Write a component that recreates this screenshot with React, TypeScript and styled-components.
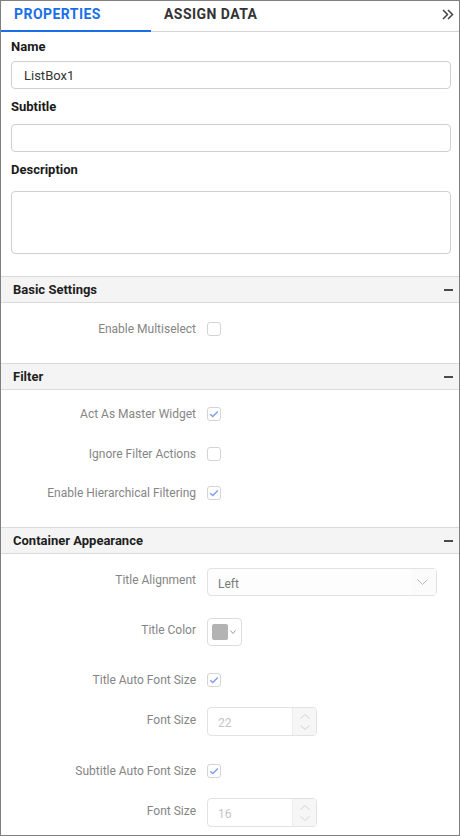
import styled, { createGlobalStyle } from "styled-components";

const GlobalStyle = createGlobalStyle`
  html, body {
    margin: 0;
    padding: 0;
    background: #fff;
  }
  body {
    font-family: Roboto, "Liberation Sans", sans-serif;
  }
  * {
    box-sizing: border-box;
  }
`;

const Check = () => (
  <svg width="12" height="12" viewBox="0 0 12 12">
    <path d="M2.2 6.2 L4.8 8.6 L9.8 3.4" fill="none" stroke="#7f9cf3" strokeWidth="1.4" />
  </svg>
);

const Chevron = ({ w, h, color }: { w: number; h: number; color: string }) => (
  <svg width={w} height={h} viewBox={`0 0 ${w} ${h}`}>
    <path d={`M0.5 0.5 L${w / 2} ${h - 0.5} L${w - 0.5} 0.5`} fill="none" stroke={color} strokeWidth="1" />
  </svg>
);

const CheckBox = ({ checked }: { checked?: boolean }) => (
  <Box>{checked && <Check />}</Box>
);

const SpinBox = ({ value }: { value: string }) => (
  <Numeric>
    <NumericValue>{value}</NumericValue>
    <Spinner>
      <svg width="10" height="5" viewBox="0 0 10 5">
        <path d="M0.5 4.5 L5 0.5 L9.5 4.5" fill="none" stroke="#d2d2d2" strokeWidth="1" />
      </svg>
      <Chevron w={10} h={5} color="#d2d2d2" />
    </Spinner>
  </Numeric>
);

const Section = ({ title }: { title: string }) => (
  <SectionHeader>
    {title}
    <Minus />
  </SectionHeader>
);

const App = () => {
  return (
    <>
      <GlobalStyle />
      <Panel>
        <TabBar>
          <Tab $active>PROPERTIES</Tab>
          <Tab>ASSIGN DATA</Tab>
          <Collapse>
            <svg width="12" height="11" viewBox="0 0 12 11">
              <path d="M1 1 L5.5 5.5 L1 10 M6 1 L10.5 5.5 L6 10" fill="none" stroke="#444" strokeWidth="1.5" />
            </svg>
          </Collapse>
        </TabBar>

        <Form>
          <Field>
            <FieldLabel $gap={6}>Name</FieldLabel>
            <TextInput defaultValue="ListBox1" />
          </Field>
          <Field>
            <FieldLabel $gap={9}>Subtitle</FieldLabel>
            <TextInput />
          </Field>
          <Field>
            <FieldLabel $gap={13}>Description</FieldLabel>
            <TextArea />
          </Field>
        </Form>

        <Section title="Basic Settings" />
        <SectionBody $top={19}>
          <Row>
            <RowLabel>Enable Multiselect</RowLabel>
            <CheckBox />
          </Row>
        </SectionBody>

        <Section title="Filter" />
        <SectionBody $top={17}>
          <Row>
            <RowLabel>Act As Master Widget</RowLabel>
            <CheckBox checked />
          </Row>
          <Row $top={26}>
            <RowLabel>Ignore Filter Actions</RowLabel>
            <CheckBox />
          </Row>
          <Row $top={25}>
            <RowLabel>Enable Hierarchical Filtering</RowLabel>
            <CheckBox checked />
          </Row>
        </SectionBody>

        <Section title="Container Appearance" />
        <SectionBody $top={14}>
          <Row>
            <RowLabel $lift>Title Alignment</RowLabel>
            <Dropdown>
              <span>Left</span>
              <DropIcon>
                <Chevron w={11} h={6} color="#b4b8c8" />
              </DropIcon>
            </Dropdown>
          </Row>
          <Row $top={22}>
            <RowLabel $lift>Title Color</RowLabel>
            <ColorPicker>
              <Swatch $color="#b3b3b3" />
              <Chevron w={6} h={4} color="#9aa0b4" />
            </ColorPicker>
          </Row>
          <Row $top={27}>
            <RowLabel>Title Auto Font Size</RowLabel>
            <CheckBox checked />
          </Row>
          <Row $top={20}>
            <RowLabel $lift>Font Size</RowLabel>
            <SpinBox value="22" />
          </Row>
          <Row $top={28}>
            <RowLabel>Subtitle Auto Font Size</RowLabel>
            <CheckBox checked />
          </Row>
          <Row $top={20}>
            <RowLabel $lift>Font Size</RowLabel>
            <SpinBox value="16" />
          </Row>
        </SectionBody>
      </Panel>
    </>
  );
};

const Panel = styled.div`
  width: 460px;
  height: 836px;
  border: 1px solid #7f7f7f;
  background: #fff;
  overflow: hidden;
  display: flex;
  flex-direction: column;
`;

// 상단 탭
const TabBar = styled.div`
  display: flex;
  align-items: flex-start;
  height: 31px;
  flex-shrink: 0;
  box-shadow: inset 0 -1px 0 #d4d4d4;
`;

const Tab = styled.div<{ $active?: boolean }>`
  width: 150px;
  height: 31px;
  display: flex;
  align-items: center;
  padding: 0 0 6px 13px;
  font-size: 14px;
  font-weight: 700;
  letter-spacing: 0.45px;
  color: ${(p) => (p.$active ? "#1a6fe8" : "#333")};
  box-shadow: ${(p) => (p.$active ? "inset 0 -2px 0 #1a6fe8" : "none")};
`;

const Collapse = styled.div`
  margin-left: auto;
  padding: 8px 5px 0 0;
  display: flex;
`;

const Form = styled.div`
  display: flex;
  flex-direction: column;
  gap: 10px;
  padding: 7px 8px 22px 10px;
`;

const Field = styled.div`
  display: flex;
  flex-direction: column;
`;

const FieldLabel = styled.label<{ $gap: number }>`
  font-size: 13px;
  line-height: 16px;
  font-weight: 700;
  color: #1a1a1a;
  margin-bottom: ${(p) => p.$gap}px;
`;

const TextInput = styled.input`
  height: 28px;
  width: 100%;
  border: 1px solid #cfcfcf;
  border-radius: 4px;
  padding: 0 12px;
  font-family: Roboto, "Liberation Sans", sans-serif;
  font-size: 13px;
  color: #333;
  outline: none;
`;

const TextArea = styled.textarea`
  height: 63px;
  width: 100%;
  border: 1px solid #cfcfcf;
  border-radius: 4px;
  resize: none;
  outline: none;
`;

// 섹션 헤더
const SectionHeader = styled.div`
  flex-shrink: 0;
  height: 27px;
  display: flex;
  align-items: center;
  justify-content: space-between;
  padding: 0 6px 0 12px;
  background: #f4f4f4;
  border-top: 1px solid #dadada;
  border-bottom: 1px solid #dadada;
  font-size: 13px;
  font-weight: 700;
  color: #1e1e1e;
`;

const Minus = styled.span`
  width: 9px;
  height: 2px;
  background: #4a4a4a;
`;

const SectionBody = styled.div<{ $top: number }>`
  flex-shrink: 0;
  display: flex;
  flex-direction: column;
  padding: ${(p) => p.$top}px 0 27px;
`;

const Row = styled.div<{ $top?: number }>`
  display: flex;
  align-items: center;
  gap: 11px;
  margin-top: ${(p) => p.$top || 0}px;
`;

const RowLabel = styled.span<{ $lift?: boolean }>`
  width: 195px;
  text-align: right;
  font-size: 12px;
  line-height: 14px;
  color: #858585;
  margin-bottom: ${(p) => (p.$lift ? 4 : 0)}px;
`;

const Box = styled.span`
  width: 14px;
  height: 14px;
  border: 1px solid #d4d4d4;
  border-radius: 3px;
  background: #fff;
  display: flex;
  align-items: center;
  justify-content: center;
`;

const Dropdown = styled.div`
  width: 230px;
  height: 28px;
  border: 1px solid #e2e2e2;
  border-radius: 4px;
  background: #fdfdfd;
  display: flex;
  align-items: center;
  justify-content: space-between;
  padding-left: 10px;
  font-size: 12px;
  color: #7a7a7a;

  span {
    padding-top: 3px;
  }
`;

const DropIcon = styled.div`
  width: 24px;
  height: 100%;
  display: flex;
  align-items: center;
  justify-content: center;
  background: #fbfbfb;
  padding-right: 4px;
`;

const ColorPicker = styled.div`
  width: 35px;
  height: 28px;
  border: 1px solid #dcdcdc;
  border-radius: 4px;
  display: flex;
  align-items: center;
  gap: 2px;
  padding-left: 4px;
`;

const Swatch = styled.span<{ $color: string }>`
  width: 16px;
  height: 16px;
  border-radius: 2px;
  background: ${(p) => p.$color};
`;

const Numeric = styled.div`
  width: 110px;
  height: 29px;
  border: 1px solid #e2e2e2;
  border-radius: 4px;
  display: flex;
  overflow: hidden;
`;

const NumericValue = styled.span`
  flex: 1;
  display: flex;
  align-items: center;
  padding: 3px 0 0 10px;
  font-size: 12px;
  color: #c4c4c4;
`;

const Spinner = styled.div`
  width: 24px;
  display: flex;
  flex-direction: column;
  align-items: center;
  justify-content: center;
  gap: 6px;
  background: #f6f6f6;
  border-left: 1px solid #ececec;
`;

export default App;
